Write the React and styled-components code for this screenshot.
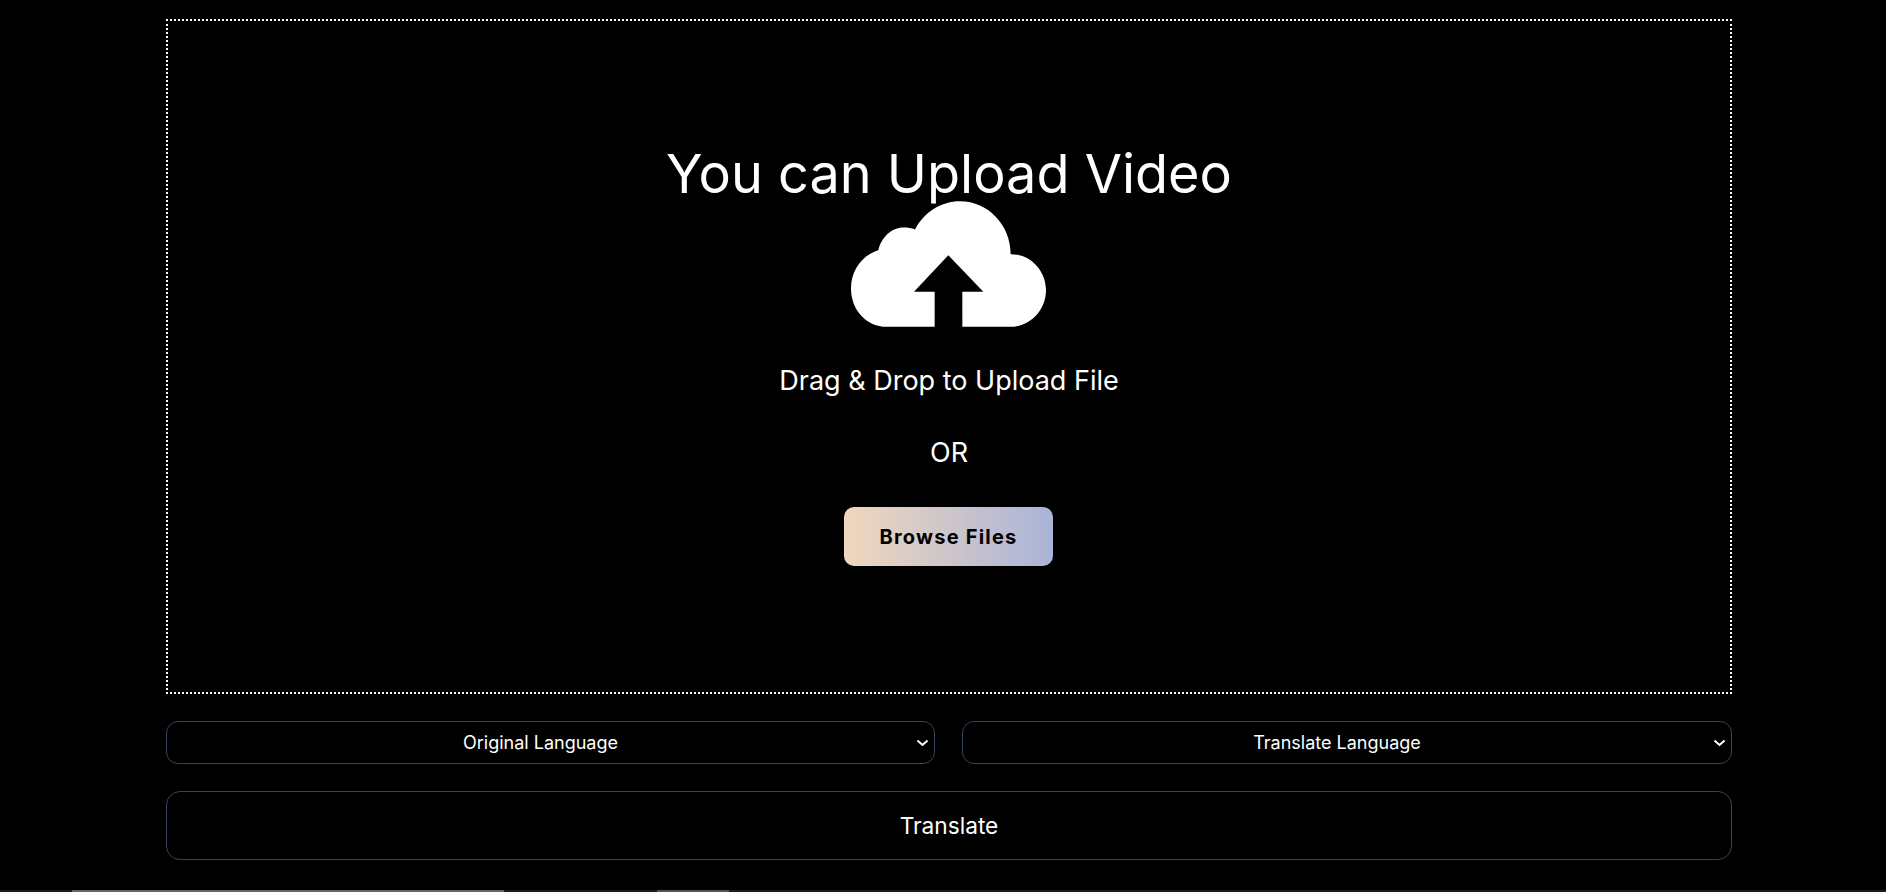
import React from "react";
import styled, { createGlobalStyle } from "styled-components";

const Global = createGlobalStyle`
  html, body { margin: 0; padding: 0; background: #000; height: 100%; overflow: hidden; }
  body { font-family: Inter, "Liberation Sans", sans-serif; color: #fff; }
`;

const Page = styled.div`
  height: 892px;
  display: flex;
  flex-direction: column;
  box-sizing: border-box;
  padding: 19px 154px 0 166px;
`;

const DropZone = styled.div`
  box-sizing: border-box;
  height: 675px;
  border: 2px dotted #fff;
  display: flex;
  flex-direction: column;
  align-items: center;
  padding-top: 123px;
`;

const Title = styled.h1`
  margin: 0;
  font-size: 54px;
  line-height: 60px;
  font-weight: 400;
`;

const Cloud = styled.svg`
  display: block;
  width: 195px;
  height: 126px;
  margin: -3px 2px 0 0;
`;

const DropHint = styled.p`
  margin: 34px 0 0;
  font-size: 27px;
  line-height: 40px;
`;

const OrText = styled.p`
  margin: 32px 0 0;
  font-size: 27px;
  line-height: 40px;
`;

const BrowseButton = styled.button`
  margin: 34px 1px 0 0;
  width: 209px;
  height: 59px;
  border: none;
  border-radius: 10px;
  background: linear-gradient(90deg, #f1d7bd, #a9b4d9);
  color: #000;
  font-family: inherit;
  font-size: 20px;
  font-weight: 700;
  letter-spacing: 1.2px;
`;

const SelectRow = styled.div`
  display: grid;
  grid-template-columns: 769px 770px;
  gap: 27px;
  margin-top: 27px;
`;

const SelectWrap = styled.div`
  position: relative;
  height: 43px;
`;

const Select = styled.select`
  appearance: none;
  height: 100%;
  width: 100%;
  box-sizing: border-box;
  border: 1px solid #374359;
  border-radius: 12px;
  background: #000;
  color: #fff;
  font-family: inherit;
  font-size: 18px;
  text-align: center;
  padding: 0 20px 0 0;
`;

const Chevron = styled.svg`
  position: absolute;
  right: 6px;
  top: 18px;
  width: 13px;
  height: 8px;
  pointer-events: none;
`;

const TranslateButton = styled.button`
  margin-top: 27px;
  height: 69px;
  box-sizing: border-box;
  border: 1px solid #374359;
  border-radius: 14px;
  background: #000;
  color: #fff;
  font-family: inherit;
  font-size: 22.7px;
`;

const BottomStrip = styled.div`
  position: fixed;
  left: 0;
  right: 0;
  bottom: 0;
  height: 2px;
  display: flex;
  background: #1c1c1c;
`;

const StripSegment = styled.span`
  display: block;
  width: ${(p) => p.$w}px;
  background: ${(p) => p.$c};
`;

function LanguageSelect({ label }) {
  return (
    <SelectWrap>
      <Select defaultValue="a">
        <option value="a">{label}</option>
      </Select>
      <Chevron viewBox="0 0 13 8" aria-hidden="true">
        <path d="M1.5 1.5 L6.5 6 L11.5 1.5" fill="none" stroke="#fff" strokeWidth="2" />
      </Chevron>
    </SelectWrap>
  );
}

export default function App() {
  return (
    <>
      <Global />
      <Page>
        <DropZone>
          <Title>You can Upload Video</Title>
          <Cloud viewBox="153 213 585 377" aria-hidden="true">
            <path
              fill="#fff"
              d="M260 590 C200 590 153 540 153 475 C153 420 187 375 235 360 C245 320 275 292 310 292 C323 292 335 294 345 298 C372 245 425 213 480 213 C565 213 632 285 632 372 C695 372 738 425 738 480 C738 540 690 590 630 590 L487 590 L487 485 L550 485 L445 375 L342 485 L404 485 L404 590 Z"
            />
          </Cloud>
          <DropHint>Drag &amp; Drop to Upload File</DropHint>
          <OrText>OR</OrText>
          <BrowseButton>Browse Files</BrowseButton>
        </DropZone>
        <SelectRow>
          <LanguageSelect label="Original Language" />
          <LanguageSelect label="Translate Language" />
        </SelectRow>
        <TranslateButton>Translate</TranslateButton>
      </Page>
      <BottomStrip>
        <StripSegment $w={72} $c="#1c1c1c" />
        <StripSegment $w={432} $c="#666" />
        <StripSegment $w={153} $c="#1c1c1c" />
        <StripSegment $w={72} $c="#555" />
      </BottomStrip>
    </>
  );
}
